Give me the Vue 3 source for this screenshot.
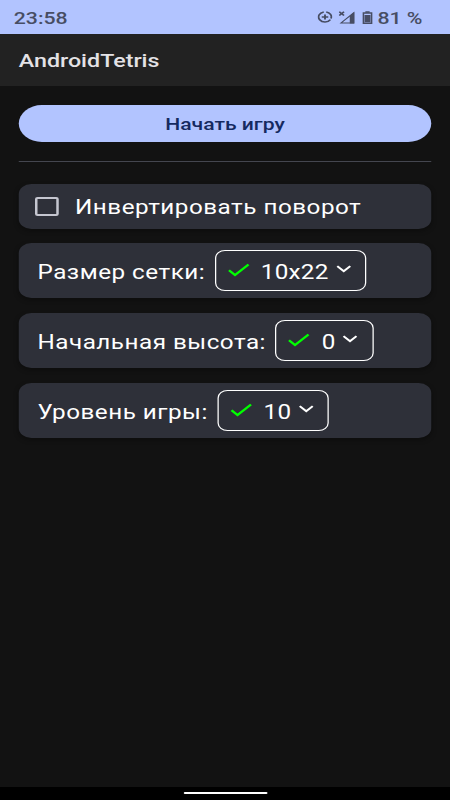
<script setup>
const settings = [
  { label: 'Размер сетки:', value: '10x22' },
  { label: 'Начальная высота:', value: '0' },
  { label: 'Уровень игры:', value: '10' },
]
</script>

<template>
  <div class="screen">
    <header class="status">
      <span class="clock">23:58</span>
      <svg class="saver" viewBox="0 0 12 12">
        <path d="M5 .9A5.1 5.1 0 1 0 10.3 8.6M7 .9A5.1 5.1 0 0 1 10.8 7.6" />
        <path d="M6 3.4v5.2M3.4 6h5.2" />
      </svg>
      <svg class="signal" viewBox="0 0 13 13">
        <path class="outline" d="M12 1.8V12H1.8Z" />
        <path class="fill" d="M12.4 1.2V12.4H8.8V5Z" />
        <path d="M.4 .7l3.8 3.8M4.2 .7L.4 4.5" />
      </svg>
      <svg class="battery" viewBox="0 0 8 13">
        <path d="M.6 2h6.8v10.3H.6Z" />
        <path class="fill" d="M2.3 .3h3.4v1.4H2.3ZM1.6 4h4.8v7.3H1.6Z" />
      </svg>
      <span class="percent">81 %</span>
    </header>
    <div class="appbar">AndroidTetris</div>
    <main class="content">
      <button class="start">Начать игру</button>
      <div class="divider"></div>
      <div class="card invert">
        <span class="checkbox"></span>
        <span class="text">Инвертировать поворот</span>
      </div>
      <div v-for="s in settings" :key="s.label" class="card">
        <span class="text">{{ s.label }}</span>
        <div class="select">
          <svg class="check" viewBox="0 0 18 14"><path d="M1.2 7.3L6 12 16.8 1.5" /></svg>
          <span class="text value">{{ s.value }}</span>
          <svg class="chevron" viewBox="0 0 12 8"><path d="M.8 1.2L6 6.2 11.2 1.2" /></svg>
        </div>
      </div>
    </main>
    <footer class="nav"><span class="pill"></span></footer>
  </div>
</template>

<style>
body {
  background: #121212;
  overflow: hidden;
}
</style>

<style scoped>
.screen {
  width: 360px;
  height: 800px;
  transform: scaleX(1.25);
  transform-origin: 0 0;
  display: flex;
  flex-direction: column;
  background: #121212;
  color: #fff;
  font-family: Roboto, sans-serif;
}
.status {
  height: 34px;
  flex: none;
  box-sizing: border-box;
  padding: 1px 22px 0 11px;
  display: flex;
  align-items: center;
  background: #b2c4ff;
  color: #474d63;
  font-size: 17px;
  font-weight: 500;
}
.status svg {
  fill: none;
  stroke: #474d63;
  stroke-width: 1.5;
}
.status svg .fill {
  fill: #474d63;
  stroke: none;
}
.status svg .outline {
  stroke-width: 1;
}
.clock {
  margin-right: auto;
}
.saver {
  width: 12px;
  height: 12px;
  margin: 0 5px 0.6px 0;
}
.signal {
  width: 13px;
  height: 13px;
  margin-right: 6px;
}
.battery {
  width: 8px;
  height: 13px;
  margin-right: 4px;
}
.appbar {
  height: 52px;
  flex: none;
  box-sizing: border-box;
  display: flex;
  align-items: center;
  padding: 2px 0 0 15px;
  background: #222;
  color: #e4e2e6;
  font-size: 18.6px;
  font-weight: 500;
}
.content {
  flex: 1;
  padding: 18.7px 15px 0;
}
.start {
  display: block;
  width: 100%;
  height: 37.3px;
  padding: 1px 0 0;
  border: 0;
  border-radius: 19px;
  background: #b2c4ff;
  color: #152a60;
  font: 500 16.9px Roboto, sans-serif;
}
.divider {
  height: 1px;
  margin: 18.6px 0 22.4px;
  background: #44464f;
}
.card {
  height: 55px;
  margin-bottom: 15px;
  box-sizing: border-box;
  padding-left: 15px;
  display: flex;
  align-items: center;
  border-radius: 10px;
  background: #2e3039;
  box-shadow: 0 2px 5px rgba(0, 0, 0, 0.3);
}
.invert {
  height: 44.6px;
  margin-bottom: 14.9px;
  padding-left: 13px;
}
.text {
  padding-top: 3px;
  font-size: 19.4px;
  letter-spacing: 0.4px;
  white-space: nowrap;
}
.value {
  letter-spacing: 0.18px;
}
.checkbox {
  width: 19px;
  height: 19px;
  box-sizing: border-box;
  margin-right: 13px;
  border: 2px solid #c5c6d0;
  border-radius: 2px;
}
.select {
  height: 41px;
  box-sizing: border-box;
  margin-left: 7.4px;
  padding: 0 11.6px 0 9.2px;
  display: flex;
  align-items: center;
  border: 1px solid #fff;
  border-radius: 8px;
}
.check {
  width: 18px;
  height: 14px;
  margin: 0 9px 2px 0;
  fill: none;
  stroke: #0f0;
  stroke-width: 2;
}
.chevron {
  width: 12px;
  height: 8px;
  margin: 0 0 3px 5.8px;
  fill: none;
  stroke: #fff;
  stroke-width: 1.8;
}
.nav {
  height: 13.5px;
  flex: none;
  display: flex;
  align-items: center;
  justify-content: center;
  background: #000;
}
.pill {
  width: 67px;
  height: 2.4px;
  border-radius: 1px;
  background: #fff;
}
</style>
